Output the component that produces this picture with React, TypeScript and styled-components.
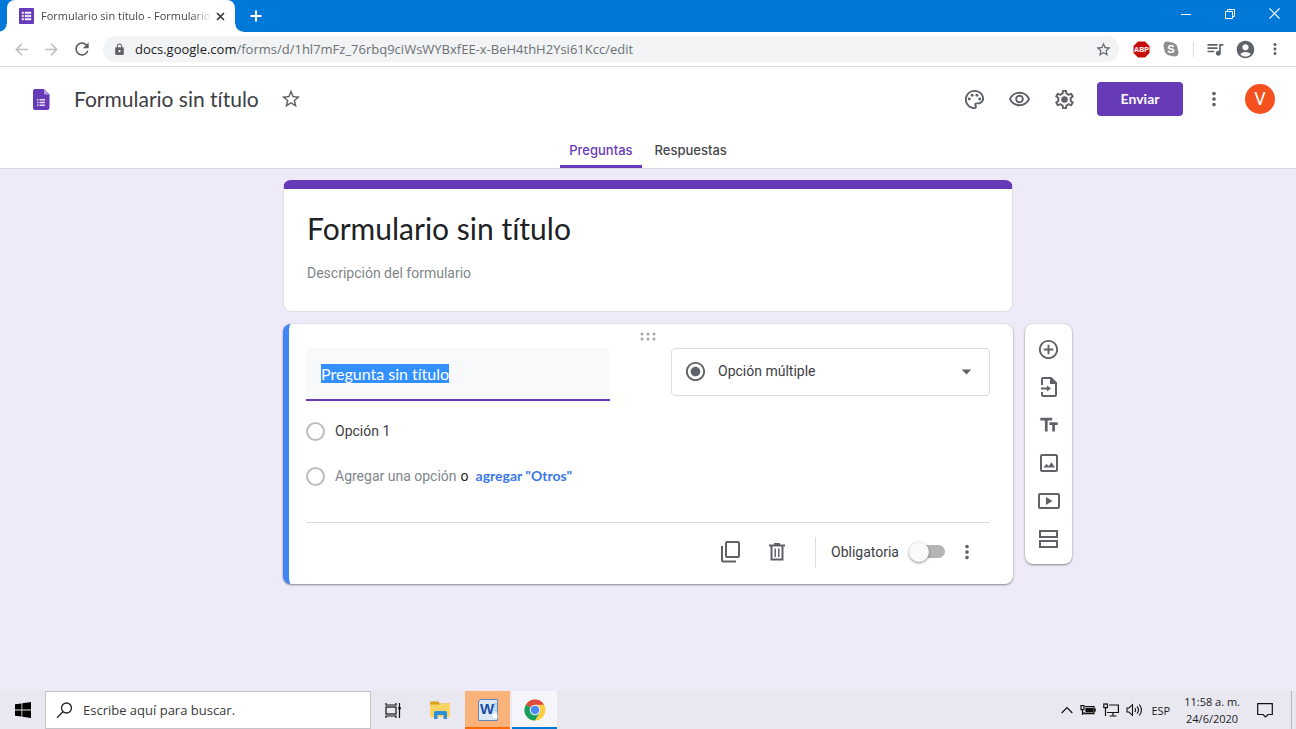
import React, { useEffect, useRef } from "react";
import styled, { createGlobalStyle, css } from "styled-components";
import {
  MdAddCircleOutline,
  MdArrowBack,
  MdArrowDropDown,
  MdArrowForward,
  MdLock,
  MdMoreVert,
  MdOutlinePalette,
  MdOutlineVisibility,
  MdQueueMusic,
  MdRadioButtonChecked,
  MdRefresh,
  MdStarBorder,
  MdAccountCircle,
  MdTextFields,
} from "react-icons/md";

const system = `"Open Sans", "Noto Sans", sans-serif`;
const brand = `Lato, "Open Sans", sans-serif`;
const roboto = `Roboto, "Liberation Sans", sans-serif`;

const GlobalStyle = createGlobalStyle`
  *, *::before, *::after { box-sizing: border-box; }
  body {
    margin: 0;
    font-family: ${roboto};
    font-size: 14px;
    color: #202124;
  }
  button, input, select { font: inherit; color: inherit; margin: 0; }
  svg { display: block; flex: none; }
`;

const Screen = styled.div`
  display: flex;
  flex-direction: column;
  min-height: 100vh;
  background: #eeeaf8;
`;

const IconButton = styled.button<{ $w?: number; $h?: number; $color?: string }>`
  display: flex;
  align-items: center;
  justify-content: center;
  flex: none;
  width: ${(p) => p.$w ?? 24}px;
  height: ${(p) => p.$h ?? 24}px;
  padding: 0;
  border: 0;
  background: none;
  color: ${(p) => p.$color ?? "#5f6368"};
  cursor: pointer;
`;

const bareField = css`
  min-width: 0;
  padding: 0;
  border: 0;
  outline: 0;
  background: none;
`;

/* Browser chrome */

const TitleBar = styled.div`
  display: flex;
  height: 32px;
  padding-left: 7px;
  background: #0078d8;
`;

const BrowserTab = styled.div`
  position: relative;
  display: flex;
  align-items: center;
  width: 228px;
  padding: 0 8px 0 12px;
  border-radius: 8px 8px 0 0;
  background: #fff;
  &::before,
  &::after {
    content: "";
    position: absolute;
    bottom: 0;
    width: 8px;
    height: 8px;
  }
  &::before {
    left: -8px;
    background: radial-gradient(circle at 0 0, transparent 7px, #fff 8px);
  }
  &::after {
    right: -8px;
    background: radial-gradient(circle at 100% 0, transparent 7px, #fff 8px);
  }
`;

const TabTitle = styled.span`
  flex: 1;
  min-width: 0;
  margin: 0 1px 0 7px;
  overflow: hidden;
  white-space: nowrap;
  font: 11px/16px ${system};
  color: #45484c;
  mask-image: linear-gradient(to right, #000 88%, transparent);
`;

const WindowControls = styled.div`
  display: flex;
  margin-left: auto;
`;

const AddressBar = styled.div`
  display: flex;
  align-items: center;
  height: 35px;
  padding: 0 3px 0 9px;
  border-bottom: 1px solid #dcdee1;
  background: #fff;
`;

const UrlBox = styled.div`
  display: flex;
  flex: 1;
  align-items: center;
  height: 26px;
  min-width: 0;
  margin: 0 10px 0 9px;
  padding: 0 4px 0 10px;
  border-radius: 13px;
  background: #f1f3f4;
`;

const Url = styled.span`
  flex: 1;
  min-width: 0;
  margin-left: 9px;
  overflow: hidden;
  white-space: nowrap;
  font: 13px/20px ${system};
  color: #6d7175;
  b {
    font-weight: 400;
    color: #202124;
  }
`;

const Divider = styled.span<{ $h: number; $m: string }>`
  flex: none;
  width: 1px;
  height: ${(p) => p.$h}px;
  margin: ${(p) => p.$m};
  background: #dadce0;
`;

/* Form editor header */

const Header = styled.header`
  border-bottom: 1px solid #d9d8df;
  background: #fff;
`;

const HeaderRow = styled.div`
  display: flex;
  align-items: center;
  height: 66px;
  padding: 0 21px 2px 33px;
`;

const DocName = styled.input`
  ${bareField}
  field-sizing: content;
  margin: 0 20px 0 24px;
  font: 21px/28px ${brand};
  font-variant-ligatures: none;
  color: #3c4043;
`;

const Actions = styled.div`
  display: flex;
  align-items: center;
  gap: 21px;
  margin-left: auto;
`;

const SendButton = styled.button`
  width: 86px;
  height: 34px;
  border: 0;
  border-radius: 4px;
  background: #673ab7;
  color: #fff;
  font: 700 14px/20px ${brand};
`;

const Avatar = styled.button`
  width: 30px;
  height: 30px;
  padding: 0;
  border: 0;
  border-radius: 50%;
  background: #f4511e;
  color: #fff;
  font: 18px/30px ${roboto};
`;

const Tabs = styled.div`
  display: flex;
  justify-content: center;
  gap: 4px;
`;

const Tab = styled.button<{ $active?: boolean }>`
  height: 35px;
  padding: 2px 9px 0;
  border: 0;
  border-bottom: 3px solid ${(p) => (p.$active ? "#673ab7" : "transparent")};
  border-radius: 2px 2px 0 0;
  background: none;
  color: ${(p) => (p.$active ? "#673ab7" : "#45484c")};
  font: 500 13px/30px Inter, ${brand};
`;

/* Form canvas */

const Canvas = styled.main`
  display: grid;
  flex: 1;
  grid-template-columns: 1fr minmax(0, 730px) 1fr;
  align-content: start;
  align-items: start;
  gap: 12px;
  padding: 11px 0 32px;
`;

const Card = styled.section`
  grid-column: 2;
  border-radius: 8px;
  background: #fff;
`;

const TitleCard = styled(Card)`
  display: flex;
  flex-direction: column;
  gap: 15px;
  padding: 19px 24px 28px 23px;
  border: 1px solid #e0deea;
  border-top: 9px solid #673ab7;
`;

const FormTitle = styled.input`
  ${bareField}
  font: 30px/40px ${brand};
  font-variant-ligatures: none;
`;

const FormDescription = styled.input`
  ${bareField}
  font: 14px/20px ${roboto};
  &::placeholder {
    color: #80868b;
    opacity: 1;
  }
`;

const QuestionCard = styled(Card)`
  padding: 8px 23px 0 17px;
  border-left: 6px solid #4285f4;
  box-shadow: 0 1px 2px rgba(60, 64, 67, 0.55), 0 0 2px rgba(60, 64, 67, 0.15);
`;

const DragHandle = styled.div`
  display: flex;
  justify-content: center;
  height: 16px;
`;

const QuestionRow = styled.div`
  display: flex;
  align-items: flex-start;
  justify-content: space-between;
  gap: 24px;
`;

const QuestionInput = styled.input`
  min-width: 0;
  flex: 0 1 304px;
  height: 53px;
  padding: 0 15px;
  border: 0;
  border-bottom: 2px solid #673ab7;
  border-radius: 4px 4px 0 0;
  outline: 0;
  background: #f8f9fa;
  font: 16px/20px ${brand};
  font-variant-ligatures: none;
  &::selection {
    background: #3390ff;
    color: #fff;
  }
`;

const TypePicker = styled.label`
  display: flex;
  flex: 0 1 319px;
  align-items: center;
  height: 48px;
  min-width: 0;
  padding: 0 11px 2px 12px;
  border: 1px solid #dadce0;
  border-radius: 4px;
  color: #5f6368;
`;

const TypeSelect = styled.select`
  ${bareField}
  flex: 1;
  appearance: none;
  margin-left: 11px;
  color: #3c4043;
`;

const Options = styled.div`
  display: flex;
  flex-direction: column;
  gap: 25px;
  padding: 20px 0 36px;
`;

const OptionRow = styled.div`
  display: flex;
  align-items: center;
  height: 20px;
`;

const OptionRadio = styled.input`
  flex: none;
  appearance: none;
  width: 19px;
  height: 19px;
  margin-right: 10px;
  border: 2px solid #bdbdbd;
  border-radius: 50%;
  background: #fff;
`;

const OptionText = styled.input`
  ${bareField}
  field-sizing: content;
  color: #3c4043;
  &::placeholder {
    color: #80868b;
    opacity: 1;
  }
`;

const Joiner = styled.span`
  margin: 0 7px 0 4px;
`;

const LinkButton = styled.button`
  padding: 0;
  border: 0;
  background: none;
  color: #3b78e7;
  font: 700 14px/20px ${brand};
`;

const CardFooter = styled.div`
  display: flex;
  align-items: center;
  justify-content: flex-end;
  height: 62px;
  padding: 0 11px 3px 0;
  border-top: 1px solid #dadce0;
`;

const RequiredLabel = styled.label`
  display: flex;
  align-items: center;
  gap: 10px;
  margin-right: 10px;
  color: #3c4043;
`;

const Switch = styled.input`
  position: relative;
  appearance: none;
  width: 36px;
  height: 20px;
  &::before {
    content: "";
    display: block;
    width: 34px;
    height: 13px;
    margin: 3px 0 0 2px;
    border-radius: 7px;
    background: #b5b5b5;
  }
  &::after {
    content: "";
    position: absolute;
    left: 0;
    top: 0;
    width: 20px;
    height: 20px;
    border-radius: 50%;
    background: #fafafa;
    box-shadow: 0 1px 3px rgba(0, 0, 0, 0.45);
  }
`;

const SideTools = styled.aside`
  grid-column: 3;
  display: flex;
  flex-direction: column;
  align-items: center;
  gap: 14px;
  width: 47px;
  padding: 13px 0;
  border-radius: 8px;
  background: #fff;
  box-shadow: 0 1px 2px rgba(60, 64, 67, 0.55), 0 0 2px rgba(60, 64, 67, 0.15);
`;

/* Windows task bar */

const TaskBar = styled.footer`
  display: flex;
  align-items: stretch;
  height: 38px;
  background: #e9e7f0;
  color: #1b1b1b;
`;

const SearchBox = styled.label`
  display: flex;
  flex: 0 1 326px;
  align-items: center;
  gap: 10px;
  min-width: 0;
  padding-left: 10px;
  border: 1px solid #c4c3ca;
  background: #fff;
`;

const SearchInput = styled.input`
  ${bareField}
  flex: 1;
  font: 13px/20px ${system};
  &::placeholder {
    color: #3a3a3a;
    opacity: 1;
  }
`;

const PinnedApps = styled.nav`
  display: flex;
  gap: 2px;
`;

const TaskButton = styled.button<{ $bg?: string; $line?: string }>`
  display: flex;
  align-items: center;
  justify-content: center;
  flex: none;
  width: 45px;
  height: 38px;
  padding: 0;
  border: 0;
  border-top: 2px solid ${(p) => p.$bg ?? "transparent"};
  border-bottom: 2px solid ${(p) => p.$line ?? "transparent"};
  background: ${(p) => p.$bg ?? "none"};
  color: inherit;
`;

const Tray = styled.div`
  display: flex;
  align-items: center;
  gap: 7px;
  margin-left: auto;
  font: 11px/17px ${system};
`;

const Language = styled.span`
  margin-left: 1px;
`;

const Clock = styled.time`
  margin: 0 10px 0 7px;
  text-align: center;
`;

const ShowDesktop = styled.button`
  align-self: stretch;
  width: 5px;
  margin-left: 11px;
  padding: 0;
  border: 0;
  border-left: 1px solid #b9b8c0;
  background: none;
`;

/* Drawings */

const FormsBadge = () => (
  <svg width="15" height="16" viewBox="0 0 15 16">
    <rect width="15" height="16" rx="1" fill="#673ab7" />
    <path d="M3 4h1.600v1.600H3zM6 4h6v1.600H6zM3 7.200h1.600v1.600H3zM6 7.200h6v1.600H6zM3 10.400h1.600V12H3zM6 10.400h6V12H6z" fill="#fff" stroke="#fff" strokeWidth=".4" />
  </svg>
);

const FormsLogo = () => (
  <svg width="17" height="21" viewBox="0 0 17 21">
    <path d="M2 0h9l5.500 5.500V19a2 2 0 0 1-2 2H2a2 2 0 0 1-2-2V2a2 2 0 0 1 2-2z" fill="#673ab7" />
    <path d="M11 0l5.500 5.500H11z" fill="#b39ddb" />
    <path d="M4 10h1.400v1.400H4zM6.500 10H12v1.400H6.500zM4 12.800h1.400v1.400H4zM6.500 12.800H12v1.400H6.500zM4 15.600h1.400V17H4zM6.500 15.600H12V17H6.500z" fill="#e6def5" />
  </svg>
);

const AdBlock = () => (
  <svg width="17" height="17" viewBox="0 0 17 17">
    <path d="M5 .5h7L16.500 5v7L12 16.500H5L.5 12V5z" fill="#c70d0a" />
    <text x="8.500" y="11" textAnchor="middle" fontFamily="Liberation Sans, sans-serif" fontWeight="700" fontSize="7" fill="#fff">ABP</text>
  </svg>
);

const Skype = () => (
  <svg width="16" height="16" viewBox="0 0 16 16">
    <circle cx="8" cy="8" r="6.800" fill="#8e8e8e" />
    <circle cx="4.500" cy="4.500" r="4" fill="#8e8e8e" />
    <circle cx="11.500" cy="11.500" r="4" fill="#8e8e8e" />
    <text x="8" y="12" textAnchor="middle" fontFamily="Liberation Sans, sans-serif" fontWeight="700" fontSize="11" fill="#fff">S</text>
  </svg>
);

const Gear = () => (
  <svg width="23" height="23" viewBox="0 0 24 24" fill="currentColor">
    <path d="M19.43 12.98c.04-.32.07-.64.07-.98s-.03-.66-.07-.98l2.110-1.650c.19-.15.24-.42.12-.64l-2-3.460c-.09-.16-.26-.25-.44-.25-.06 0-.12.01-.17.03l-2.490 1c-.52-.4-1.080-.73-1.690-.98l-.38-2.650C14.460 2.180 14.250 2 14 2h-4c-.25 0-.46.18-.49.42l-.38 2.650c-.61.25-1.170.59-1.690.98l-2.490-1c-.06-.02-.12-.03-.18-.03-.17 0-.34.09-.43.25l-2 3.460c-.13.22-.07.49.12.64l2.110 1.650c-.04.32-.07.65-.07.98s.03.66.07.98l-2.110 1.650c-.19.15-.24.42-.12.64l2 3.460c.09.16.26.25.44.25.06 0 .12-.01.17-.03l2.490-1c.52.4 1.080.73 1.690.98l.38 2.650c.03.24.24.42.49.42h4c.25 0 .46-.18.49-.42l.38-2.650c.61-.25 1.170-.59 1.690-.98l2.490 1c.06.02.12.03.18.03.17 0 .34-.09.43-.25l2-3.460c.12-.22.07-.49-.12-.64l-2.110-1.650zm-1.980-1.710c.04.31.05.52.05.73 0 .21-.02.43-.05.73l-.14 1.130.89.7 1.080.84-.7 1.210-1.270-.51-1.040-.42-.9.68c-.43.32-.84.56-1.250.73l-1.060.43-.16 1.130-.2 1.350h-1.400l-.19-1.350-.16-1.130-1.060-.43c-.43-.18-.83-.41-1.230-.71l-.91-.7-1.060.43-1.270.51-.7-1.210 1.080-.84.89-.7-.14-1.130c-.03-.31-.05-.54-.05-.74s.02-.43.05-.73l.14-1.130-.89-.7-1.080-.84.7-1.210 1.270.51 1.040.42.9-.68c.43-.32.84-.56 1.250-.73l1.060-.43.16-1.130.2-1.350h1.390l.19 1.350.16 1.130 1.060.43c.43.18.83.41 1.230.71l.91.7 1.060-.43 1.270-.51.7 1.210-1.070.85-.89.7.14 1.130z" />
    <circle cx="12" cy="12" r="3.400" />
  </svg>
);

const DragDots = () => (
  <svg width="16" height="9" viewBox="0 0 16 9" fill="#a9a9a9">
    {[2, 8, 14].map((x) =>
      [2, 7].map((y) => <circle key={`${x}-${y}`} cx={x} cy={y} r="1.500" />)
    )}
  </svg>
);

const stroke = { fill: "none", stroke: "currentColor", strokeWidth: 2 };

const CopyIcon = () => (
  <svg width="20" height="22" viewBox="0 0 20 22" {...stroke}>
    <rect x="5" y="1" width="13" height="15" rx="1" />
    <path d="M1 5v14.500a1 1 0 0 0 1 1h13" />
  </svg>
);

const TrashIcon = () => (
  <svg width="16" height="18" viewBox="0 0 16 18" {...stroke}>
    <path d="M0 2.500h16M5 1h6M2.500 3v13.500h11V3" />
    <path d="M6.200 5.500v8.500M9.800 5.500v8.500" strokeWidth="1.500" />
  </svg>
);

const ImportIcon = () => (
  <svg width="18" height="20" viewBox="0 0 18 20" {...stroke}>
    <path d="M2 8V2a1 1 0 0 1 1-1h8l5 5v12a1 1 0 0 1-1 1H3a1 1 0 0 1-1-1v-3" />
    <path d="M10.500 1v5.500H16z" fill="currentColor" strokeWidth="1" />
    <path d="M1 11.500h7" />
    <path d="M7 8.500l4 3-4 3z" fill="currentColor" stroke="none" />
  </svg>
);

const PictureIcon = () => (
  <svg width="18" height="18" viewBox="0 0 18 18" {...stroke}>
    <rect x="1" y="1" width="16" height="16" rx="1" />
    <path d="M3.500 13.500l3-3.800 2.100 2.500 3-4 3.400 5.300z" fill="currentColor" stroke="none" />
  </svg>
);

const VideoIcon = () => (
  <svg width="22" height="16" viewBox="0 0 22 16" {...stroke}>
    <rect x="1" y="1" width="20" height="14" rx="1" />
    <path d="M8 4l6.500 4L8 12z" fill="currentColor" stroke="none" />
  </svg>
);

const SectionIcon = () => (
  <svg width="19" height="18" viewBox="0 0 19 18" {...stroke}>
    <rect x="1" y="1" width="17" height="6" />
    <rect x="1" y="11" width="17" height="6" />
  </svg>
);

const WindowsLogo = () => (
  <svg width="16" height="16" viewBox="0 0 16 16" fill="#000">
    <path d="M0 2.300L6.500 1.400v6.200H0zM7.300 1.300L16 0v7.600H7.300zM0 8.400h6.500v6.200L0 13.700zM7.300 8.400H16V16l-8.700-1.300z" />
  </svg>
);

const Magnifier = () => (
  <svg width="17" height="17" viewBox="0 0 17 17" fill="none" stroke="#222" strokeWidth="1.300">
    <circle cx="10.500" cy="6" r="5" />
    <path d="M7 9.700L1 15.700" />
  </svg>
);

const TaskViewIcon = () => (
  <svg width="17" height="15" viewBox="0 0 17 15" fill="none" stroke="#111" strokeWidth="1.200">
    <rect x="1" y="4" width="10" height="7" />
    <path d="M1 0v2h10V0M1 15v-2h10v2M14.500 0v15" />
    <rect x="13.300" y="4" width="2.400" height="2.400" fill="#111" stroke="none" />
  </svg>
);

const FolderIcon = () => (
  <svg width="21" height="18" viewBox="0 0 21 18">
    <path d="M0 1.500Q0 .5 1 .5h7.500l1 2H20V16H0z" fill="#dba11c" />
    <path d="M0 3.500h9.500l1-1H20V16H0z" fill="#fcd462" />
    <path d="M4 18v-6.500a1.500 1.500 0 0 1 1.500-1.500h10a1.500 1.500 0 0 1 1.500 1.500V18h-3.500v-4h-6v4z" fill="#2f8fdb" />
  </svg>
);

const WordIcon = () => (
  <svg width="22" height="22" viewBox="0 0 22 22">
    <path d="M3 .5h17.500v21H1.500V3z" fill="#dbe8f7" stroke="#6488b8" />
    <path d="M17 5h3M17 8h3M17 11h3" stroke="#8faed6" />
    <text x="10" y="15" textAnchor="middle" fontFamily="Liberation Sans, sans-serif" fontWeight="700" fontSize="15" fill="#174ea6">W</text>
    <path d="M14.500 15.500l5-3 1.500 6.500-5 1z" fill="#fff" stroke="#a9bfdd" strokeWidth=".5" />
  </svg>
);

const ChromeIcon = () => (
  <svg width="22" height="22" viewBox="0 0 22 22">
    <circle cx="11" cy="11" r="10.500" fill="#ffcd40" />
    <path d="M11 11L1.900 5.700A10.500 10.500 0 0 1 20.100 5.700H11z" fill="#dd4b3e" />
    <path d="M11 11L1.900 5.700A10.500 10.500 0 0 0 11 21.500l4.600-8z" fill="#17a05d" />
    <circle cx="11" cy="11" r="5.300" fill="#f4f4f4" />
    <circle cx="11" cy="11" r="4.300" fill="#4a8af4" />
  </svg>
);

const trayStroke = { fill: "none", stroke: "#111", strokeWidth: 1.2 };

const ChevronUp = () => (
  <svg width="12" height="8" viewBox="0 0 12 8" {...trayStroke}>
    <path d="M.7 7L6 1.500 11.300 7" />
  </svg>
);

const BatteryIcon = () => (
  <svg width="16" height="12" viewBox="0 0 16 12" {...trayStroke}>
    <path d="M5 2.600h9v7H4V8M15.200 4.500v3M2.500 6v5" />
    <path d="M6 4.500h6.800v3.500H6z" fill="#111" />
    <rect x="1" y="1.600" width="3" height="4" fill="#e9e7f1" />
  </svg>
);

const NetworkIcon = () => (
  <svg width="16" height="14" viewBox="0 0 16 14" {...trayStroke}>
    <path d="M6 2h9.400v7.500H4M10 9.500V13M6.500 13h7M2.500 5v8" />
    <rect x=".8" y="1" width="3.600" height="3.600" />
  </svg>
);

const SpeakerIcon = () => (
  <svg width="17" height="14" viewBox="0 0 17 14" {...trayStroke} strokeWidth="1.100">
    <path d="M1 5h2l3.500-3.300v10.600L3 9H1zM8.800 5q1.600 2 0 4M11 3.300q3 3.700 0 7.400M13.300 1.500q4.300 5.500 0 11" />
  </svg>
);

const NoticeIcon = () => (
  <svg width="16" height="15" viewBox="0 0 16 15" {...trayStroke}>
    <path d="M.7.700h14.600v10.800H11L8.500 14 6 11.500H.7z" />
  </svg>
);

export default function App() {
  const question = useRef<HTMLInputElement>(null);

  useEffect(() => {
    question.current?.focus();
    question.current?.select();
  }, []);

  return (
    <Screen>
      <GlobalStyle />
      <TitleBar>
        <BrowserTab>
          <FormsBadge />
          <TabTitle>Formulario sin título - Formulario</TabTitle>
          <IconButton $w={14} $h={18} aria-label="Cerrar pestaña">
            <svg width="9" height="9" viewBox="0 0 9 9" stroke="#333" strokeWidth="1.600">
              <path d="M1 1l7 7M8 1L1 8" />
            </svg>
          </IconButton>
        </BrowserTab>
        <IconButton $w={42} $h={32} aria-label="Nueva pestaña">
          <svg width="12" height="12" viewBox="0 0 12 12" stroke="#fff" strokeWidth="2">
            <path d="M6 .5v11M.5 6h11" />
          </svg>
        </IconButton>
        <WindowControls>
          <IconButton $w={44} $h={27} aria-label="Minimizar">
            <svg width="10" height="10" viewBox="0 0 10 10" stroke="#fff">
              <path d="M0 5.500h10" />
            </svg>
          </IconButton>
          <IconButton $w={44} $h={27} aria-label="Restaurar">
            <svg width="10" height="10" viewBox="0 0 10 10" stroke="#fff" fill="none">
              <path d="M.5 2.500h7v7h-7zM2.500 2.500v-2h7v7h-2" />
            </svg>
          </IconButton>
          <IconButton $w={44} $h={27} aria-label="Cerrar">
            <svg width="11" height="11" viewBox="0 0 11 11" stroke="#fff" strokeWidth="1.200">
              <path d="M.5.500l10 10M10.500.500l-10 10" />
            </svg>
          </IconButton>
        </WindowControls>
      </TitleBar>

      <AddressBar>
        <IconButton aria-label="Atrás" $color="#bdbfc2"><MdArrowBack size={19} /></IconButton>
        <IconButton aria-label="Adelante" $w={36} $color="#bdbfc2"><MdArrowForward size={19} /></IconButton>
        <IconButton aria-label="Recargar" $w={25}><MdRefresh size={20} /></IconButton>
        <UrlBox>
          <MdLock size={13} color="#5f6368" />
          <Url><b>docs.google.com</b>/forms/d/1hl7mFz_76rbq9ciWsWYBxfEE-x-BeH4thH2Ysi61Kcc/edit</Url>
          <IconButton aria-label="Marcar página"><MdStarBorder size={17} /></IconButton>
        </UrlBox>
        <IconButton aria-label="Adblock Plus"><AdBlock /></IconButton>
        <IconButton $w={36} aria-label="Skype"><Skype /></IconButton>
        <Divider $h={15} $m="0 3px 0 4px" />
        <IconButton $w={36} aria-label="Control de medios"><MdQueueMusic size={20} /></IconButton>
        <IconButton aria-label="Perfil"><MdAccountCircle size={21} /></IconButton>
        <IconButton $w={36} aria-label="Menú"><MdMoreVert size={18} /></IconButton>
      </AddressBar>

      <Header>
        <HeaderRow>
          <FormsLogo />
          <DocName aria-label="Nombre del documento" defaultValue="Formulario sin título" />
          <IconButton aria-label="Destacar"><MdStarBorder size={22} /></IconButton>
          <Actions>
            <IconButton aria-label="Personalizar tema"><MdOutlinePalette size={23} /></IconButton>
            <IconButton aria-label="Vista previa"><MdOutlineVisibility size={23} /></IconButton>
            <IconButton aria-label="Configuración"><Gear /></IconButton>
            <SendButton>Enviar</SendButton>
            <IconButton $w={20} aria-label="Más"><MdMoreVert size={22} /></IconButton>
            <Avatar aria-label="Cuenta">V</Avatar>
          </Actions>
        </HeaderRow>
        <Tabs role="tablist">
          <Tab role="tab" aria-selected="true" $active>Preguntas</Tab>
          <Tab role="tab" aria-selected="false">Respuestas</Tab>
        </Tabs>
      </Header>

      <Canvas>
        <TitleCard>
          <FormTitle aria-label="Título del formulario" defaultValue="Formulario sin título" />
          <FormDescription aria-label="Descripción" placeholder="Descripción del formulario" />
        </TitleCard>

        <QuestionCard>
          <DragHandle><DragDots /></DragHandle>
          <QuestionRow>
            <QuestionInput ref={question} aria-label="Pregunta" defaultValue="Pregunta sin título" />
            <TypePicker>
              <MdRadioButtonChecked size={23} />
              <TypeSelect aria-label="Tipo de pregunta">
                <option>Opción múltiple</option>
              </TypeSelect>
              <MdArrowDropDown size={23} />
            </TypePicker>
          </QuestionRow>
          <Options>
            <OptionRow>
              <OptionRadio type="radio" disabled aria-label="Opción 1" />
              <OptionText aria-label="Texto de la opción 1" defaultValue="Opción 1" />
            </OptionRow>
            <OptionRow>
              <OptionRadio type="radio" disabled aria-label="Nueva opción" />
              <OptionText aria-label="Agregar una opción" placeholder="Agregar una opción" />
              <Joiner>o</Joiner>
              <LinkButton>agregar "Otros"</LinkButton>
            </OptionRow>
          </Options>
          <CardFooter>
            <IconButton $w={46} aria-label="Duplicar"><CopyIcon /></IconButton>
            <IconButton $w={46} aria-label="Eliminar"><TrashIcon /></IconButton>
            <Divider $h={31} $m="0 15px" />
            <RequiredLabel>
              Obligatoria
              <Switch type="checkbox" role="switch" />
            </RequiredLabel>
            <IconButton aria-label="Más opciones"><MdMoreVert size={22} /></IconButton>
          </CardFooter>
        </QuestionCard>

        <SideTools aria-label="Agregar elementos">
          <IconButton aria-label="Agregar pregunta"><MdAddCircleOutline size={23} /></IconButton>
          <IconButton aria-label="Importar preguntas"><ImportIcon /></IconButton>
          <IconButton aria-label="Agregar título"><MdTextFields size={22} /></IconButton>
          <IconButton aria-label="Agregar imagen"><PictureIcon /></IconButton>
          <IconButton aria-label="Agregar video"><VideoIcon /></IconButton>
          <IconButton aria-label="Agregar sección"><SectionIcon /></IconButton>
        </SideTools>
      </Canvas>

      <TaskBar>
        <TaskButton aria-label="Inicio"><WindowsLogo /></TaskButton>
        <SearchBox>
          <Magnifier />
          <SearchInput aria-label="Buscar" placeholder="Escribe aquí para buscar." />
        </SearchBox>
        <PinnedApps>
          <TaskButton aria-label="Vista de tareas"><TaskViewIcon /></TaskButton>
          <TaskButton aria-label="Explorador de archivos"><FolderIcon /></TaskButton>
          <TaskButton aria-label="Word" $bg="#fab27b" $line="#ff6a00"><WordIcon /></TaskButton>
          <TaskButton aria-label="Chrome" $bg="#f6f5fb" $line="#0078d7"><ChromeIcon /></TaskButton>
        </PinnedApps>
        <Tray>
          <ChevronUp />
          <BatteryIcon />
          <NetworkIcon />
          <SpeakerIcon />
          <Language>ESP</Language>
          <Clock>
            11:58 a. m.
            <br />
            24/6/2020
          </Clock>
          <NoticeIcon />
          <ShowDesktop aria-label="Mostrar escritorio" />
        </Tray>
      </TaskBar>
    </Screen>
  );
}
